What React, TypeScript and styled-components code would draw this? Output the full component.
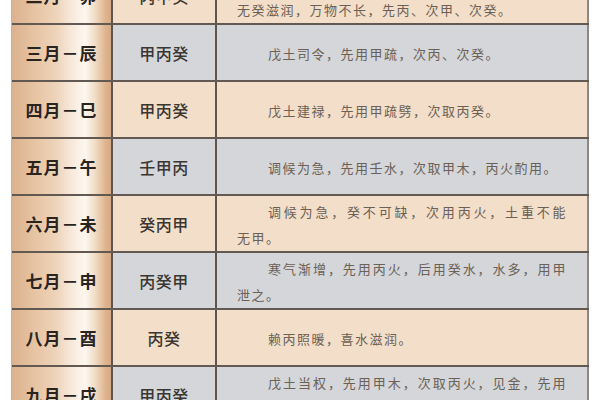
import React from 'react'
import styled, { createGlobalStyle } from 'styled-components'

const GlobalStyle = createGlobalStyle`
  html, body {
    margin: 0;
    padding: 0;
    background: #ffffff;
    overflow: hidden;
  }
  body {
    font-family: "Noto Sans CJK SC", "Noto Sans", sans-serif;
  }
`

type Tone = 'peach' | 'gray'

interface MonthRow {
  month: string
  gods: string
  lines: string[]
  tone: Tone
}

const rows: MonthRow[] = [
  { month: '二月－卯', gods: '丙甲癸', tone: 'peach', lines: ['无丙照暖，戊土不生；无甲疏劈，戊土不灵；', '无癸滋润，万物不长，先丙、次甲、次癸。'] },
  { month: '三月－辰', gods: '甲丙癸', tone: 'gray', lines: ['戊土司令，先用甲疏，次丙、次癸。'] },
  { month: '四月－巳', gods: '甲丙癸', tone: 'peach', lines: ['戊土建禄，先用甲疏劈，次取丙癸。'] },
  { month: '五月－午', gods: '壬甲丙', tone: 'gray', lines: ['调候为急，先用壬水，次取甲木，丙火酌用。'] },
  { month: '六月－未', gods: '癸丙甲', tone: 'peach', lines: ['调候为急，癸不可缺，次用丙火，土重不能', '无甲。'] },
  { month: '七月－申', gods: '丙癸甲', tone: 'gray', lines: ['寒气渐增，先用丙火，后用癸水，水多，用甲', '泄之。'] },
  { month: '八月－酉', gods: '丙癸', tone: 'peach', lines: ['赖丙照暖，喜水滋润。'] },
  { month: '九月－戌', gods: '甲丙癸', tone: 'gray', lines: ['戊土当权，先用甲木，次取丙火，见金，先用', '丙火，后用癸水。'] },
]

const toneBg: Record<Tone, string> = {
  peach: '#f3dec9',
  gray: '#d4d6da',
}

const Page = styled.div`
  width: 600px;
  height: 400px;
  overflow: hidden;
  box-sizing: border-box;
  padding: 0 11px 0 11px;
`

const Table = styled.div`
  margin-top: -32px;
  display: flex;
  flex-direction: column;
  border-left: 1px solid #d4ae8c;
`

const Row = styled.div<{ $tone: Tone }>`
  display: grid;
  grid-template-columns: 101px 104px 1fr;
  height: 57px;
  box-sizing: border-box;
  border-bottom: 2px solid #625a52;
  background: ${p => toneBg[p.$tone]};
`

const MonthCell = styled.div`
  display: flex;
  align-items: center;
  justify-content: center;
  border-right: 2px solid #5e564e;
  background: linear-gradient(
    90deg,
    #dcb28e 0%,
    #e6c3a2 22%,
    #eed4bb 45%,
    #f8ebde 62%,
    #fdf7f0 74%,
    #f1dcc6 84%,
    #dfb690 94%,
    #d6a985 100%
  );
  font-size: 17px;
  font-weight: 700;
  letter-spacing: 1px;
  color: #2a241f;
`

const GodsCell = styled.div`
  display: flex;
  align-items: center;
  justify-content: center;
  border-right: 2px solid #5e564e;
  font-size: 16px;
  font-weight: 500;
  letter-spacing: 0.5px;
  color: #3a3632;
`

const TextCell = styled.div`
  display: flex;
  flex-direction: column;
  justify-content: center;
  padding: 2px 20px 0 20px;
  border-right: 2px solid #8c8782;
  font-size: 13px;
  line-height: 26px;
  letter-spacing: 1.5px;
  color: #6b6156;
`

const Line = styled.div<{ $first: boolean; $wrapped: boolean }>`
  text-indent: ${p => (p.$first ? '31px' : '0')};
  text-align: left;
  text-align-last: ${p => (p.$wrapped ? 'justify' : 'left')};
  white-space: nowrap;
`

export default function App() {
  return (
    <>
      <GlobalStyle />
      <Page>
        <Table>
          {rows.map(r => (
            <Row key={r.month} $tone={r.tone}>
              <MonthCell>{r.month}</MonthCell>
              <GodsCell>{r.gods}</GodsCell>
              <TextCell>
                {r.lines.map((line, i) => (
                  <Line
                    key={i}
                    $first={i === 0}
                    $wrapped={i === 0 && r.lines.length > 1}
                  >
                    {line}
                  </Line>
                ))}
              </TextCell>
            </Row>
          ))}
        </Table>
      </Page>
    </>
  )
}
